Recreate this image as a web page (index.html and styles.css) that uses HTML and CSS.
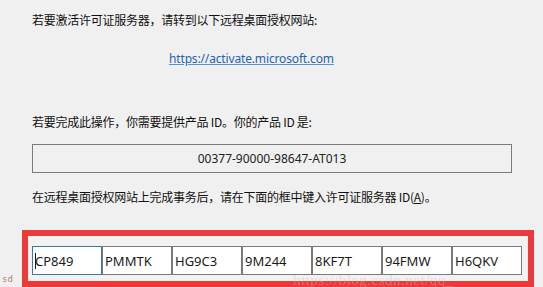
FILE: index.html
```html
<!DOCTYPE html>
<html lang="zh-CN">
<head>
  <meta charset="UTF-8">
  <title>许可证服务器激活</title>
  <link rel="stylesheet" href="styles.css">
</head>
<body>
<div class="panel">
  <p class="line first">若要激活许可证服务器，请转到以下远程桌面授权网站:</p>
  <a class="site-link" href="#">https://activate.microsoft.com</a>
  <p class="line second">若要完成此操作，你需要提供产品 ID。你的产品 ID 是:</p>
  <div class="product-id">00377-90000-98647-AT013</div>
  <p class="line third">在远程桌面授权网站上完成事务后，请在下面的框中键入许可证服务器 ID(<u>A</u>)。</p>

  <div class="highlight">
    <div class="key-row">
      <div class="key-box focused"><span class="caret"></span>CP849</div>
      <div class="key-box">PMMTK</div>
      <div class="key-box">HG9C3</div>
      <div class="key-box">9M244</div>
      <div class="key-box">8KF7T</div>
      <div class="key-box">94FMW</div>
      <div class="key-box">H6QKV</div>
    </div>
    <span class="watermark">https://blog.csdn.net/qq_</span>
  </div>
</div>
<span class="corner-note">sd</span>
</body>
</html>
```

FILE: styles.css
```css
body {
  margin: 0;
  background-color: #f0f0f0;
  color: #111;
  font-family: "Noto Sans", "Noto Sans CJK SC", sans-serif;
  font-size: 12px;
  height: 287px;
  overflow: hidden;
  position: relative;
}
.panel {
  padding: 12px 0 0 32px;
}
.line {
  margin: 0;
  line-height: 16px;
  font-family: "Noto Sans CJK SC", sans-serif;
  font-size: 12px;
  letter-spacing: -0.25px;
}
.site-link {
  display: block;
  margin-top: 23px;
  padding-left: 137px;
  line-height: 16px;
  color: #1e62b8;
  font-size: 12px;
  letter-spacing: -0.15px;
  text-decoration: underline;
  text-decoration-color: #5a8fd0;
}
.line.second {
  margin-top: 47px;
}
.product-id {
  margin-top: 14px;
  width: 478px;
  height: 27px;
  border: 1px solid #7b7b7b;
  display: flex;
  align-items: center;
  justify-content: center;
  font-size: 12px;
  color: #222;
}
.line.third {
  margin-top: 16px;
}
.highlight {
  margin: 25px 0 0 -10px;
  width: 491px;
  height: 35px;
  border: 6px solid #ec3a3a;
  padding: 10px 5px 0 4px;
  background-color: #f2f2f2;
  position: relative;
}
.key-row {
  display: flex;
}
.key-box {
  width: 66px;
  height: 27px;
  border: 1px solid #7a7a7a;
  background-color: #fff;
  display: flex;
  align-items: center;
  padding-left: 2px;
  font-size: 13px;
  color: #1a1a1a;
}
.key-box.focused {
  border-color: #3b78a8;
}
.caret {
  display: inline-block;
  width: 1px;
  height: 16px;
  background-color: #111;
  margin-right: -1px;
}
.watermark {
  position: absolute;
  left: 265px;
  top: 36px;
  font-size: 15px;
  font-family: "Liberation Serif", serif;
  color: rgba(190, 190, 190, 0.4);
  letter-spacing: 0.5px;
}
.corner-note {
  position: absolute;
  left: 2px;
  top: 274px;
  font-family: "DejaVu Sans Mono", monospace;
  font-size: 9px;
  color: #b08070;
}
```
